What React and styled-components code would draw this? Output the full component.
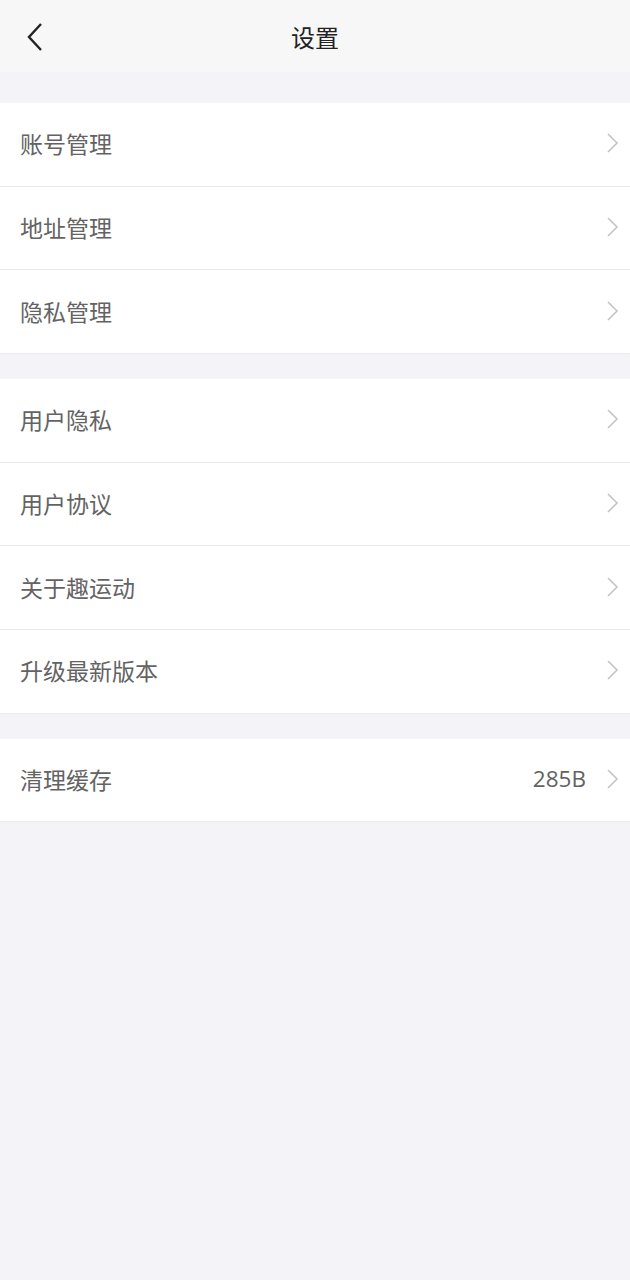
import React from "react";
import styled, { createGlobalStyle } from "styled-components";

const Global = createGlobalStyle`
  html, body { margin: 0; padding: 0; background: #f4f3f8; }
  body { font-family: "Noto Sans CJK SC", "Noto Sans", sans-serif; }
`;

const Page = styled.div`
  min-height: 1280px;
  background: #f4f3f8;
`;

const Header = styled.header`
  height: 72px;
  background: #f7f7f8;
  display: flex;
  align-items: center;
  justify-content: center;
  position: relative;
`;

const Back = styled.button`
  position: absolute;
  left: 20px;
  top: 20px;
  width: 30px;
  height: 34px;
  border: 0;
  padding: 0;
  background: transparent;
  display: flex;
  align-items: center;
  justify-content: center;
`;

const Title = styled.h1`
  margin: 0;
  font-size: 24px;
  font-weight: 400;
  color: #222;
`;

const Group = styled.section`
  margin-top: ${(p) => p.$gap}px;
  background: #fff;
`;

const Row = styled.div`
  box-sizing: border-box;
  height: 83.67px;
  display: flex;
  align-items: center;
  padding: 0 10px 2px 20px;
  border-bottom: 1px solid #ececef;
`;

const Label = styled.span`
  flex: 1;
  font-size: 23px;
  color: #636363;
`;

const Value = styled.span`
  font-size: 22.5px;
  color: #636363;
  margin-right: 20px;
  font-family: "Open Sans", "Noto Sans", sans-serif;
`;

const Chevron = () => (
  <svg width="14" height="22" viewBox="0 0 14 22">
    <path d="M2 2 L11 11 L2 20" fill="none" stroke="#c4c4c4" strokeWidth="1.6" />
  </svg>
);

const groups = [
  { gap: 31, items: [{ label: "账号管理" }, { label: "地址管理" }, { label: "隐私管理" }] },
  {
    gap: 25,
    items: [{ label: "用户隐私" }, { label: "用户协议" }, { label: "关于趣运动" }, { label: "升级最新版本" }],
  },
  { gap: 25, items: [{ label: "清理缓存", value: "285B" }] },
];

export default function App() {
  return (
    <Page>
      <Global />
      <Header>
        <Back aria-label="返回">
          <svg width="18" height="30" viewBox="0 0 18 30">
            <path d="M15 2 L3 15 L15 28" fill="none" stroke="#222" strokeWidth="2.4" strokeLinejoin="miter" />
          </svg>
        </Back>
        <Title>设置</Title>
      </Header>
      {groups.map((g, i) => (
        <Group key={i} $gap={g.gap}>
          {g.items.map((it) => (
            <Row key={it.label}>
              <Label>{it.label}</Label>
              {it.value && <Value>{it.value}</Value>}
              <Chevron />
            </Row>
          ))}
        </Group>
      ))}
    </Page>
  );
}
